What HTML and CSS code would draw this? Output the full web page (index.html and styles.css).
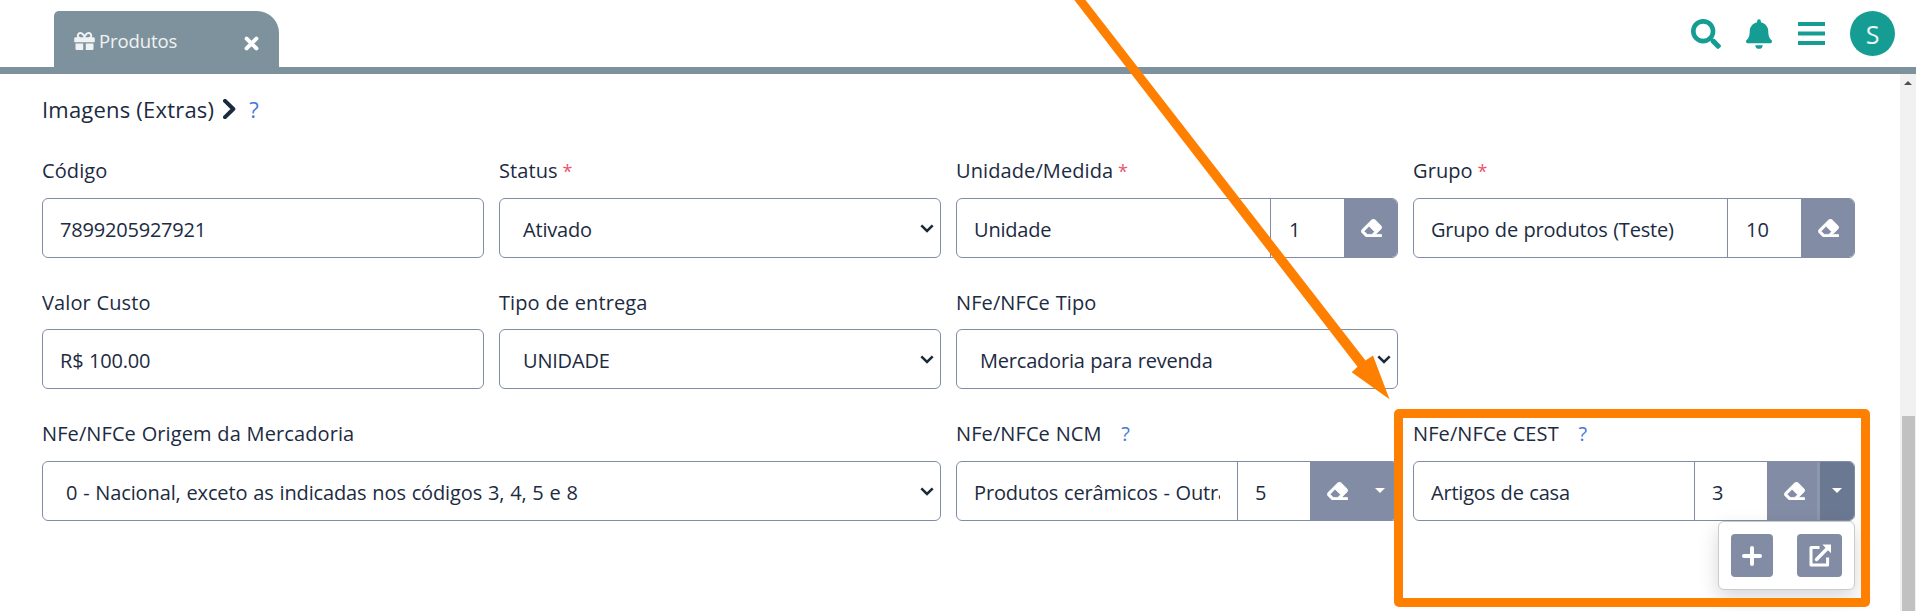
FILE: index.html
```
<!DOCTYPE html>
<html lang="pt-BR">
<head>
<meta charset="utf-8">
<title>Produtos</title>
<link rel="stylesheet" href="styles.css">
</head>
<body>
<svg class="sprite" aria-hidden="true">
  <symbol id="eraser" viewBox="0 32 512 448"><path stroke="#fff" stroke-width="18" d="M497.941 273.941c18.745-18.745 18.745-49.137 0-67.882l-160-160c-18.745-18.745-49.136-18.746-67.883 0l-256 256c-18.745 18.745-18.745 49.137 0 67.882l96 96A48.004 48.004 0 0 0 144 480h356c6.627 0 12-5.373 12-12v-40c0-6.627-5.373-12-12-12H355.883l142.058-142.059zm-302.627-62.627l137.373 137.373L265.373 416H150.628l-80-80 124.686-124.686z"/></symbol>
  <symbol id="chev" viewBox="0 0 14 9"><path d="M1.3 1.3 7 6.9l5.7-5.6" fill="none" stroke="#1c2b3a" stroke-width="2.5"/></symbol>
</svg>
<header class="topbar">
  <div class="tab">
    <svg class="gift" viewBox="0 32 512 448"><path d="M32 448c0 17.7 14.3 32 32 32h160V320H32v128zm256 32h160c17.7 0 32-14.3 32-32V320H288v160zm192-320h-42.1c6.2-12.1 10.1-25.5 10.1-40 0-48.5-39.5-88-88-88-41.6 0-68.5 21.3-103 68.3-34.5-47-61.4-68.3-103-68.3-48.5 0-88 39.5-88 88 0 14.5 3.8 27.9 10.1 40H32c-17.7 0-32 14.3-32 32v80c0 8.8 7.2 16 16 16h480c8.8 0 16-7.2 16-16v-80c0-17.7-14.3-32-32-32zm-326.1 0c-22.1 0-40-17.9-40-40s17.9-40 40-40c19.9 0 34.6 3.3 86.1 80h-86.1zm206.1 0h-86.1c51.4-76.5 65.7-80 86.1-80 22.1 0 40 17.9 40 40s-17.9 40-40 40z"/></svg>
    <span class="tab-name">Produtos</span>
    <svg class="close" viewBox="0 0 15 15"><path d="M2.6 2.6l9.8 9.8M12.4 2.6l-9.8 9.8"/></svg>
  </div>
  <nav class="actions">
    <svg class="search" viewBox="0 0 512 512"><path d="M505 442.7L405.3 343c-4.5-4.5-10.6-7-17-7H372c27.6-35.3 44-79.7 44-128C416 93.1 322.9 0 208 0S0 93.1 0 208s93.1 208 208 208c48.3 0 92.7-16.4 128-44v16.3c0 6.4 2.5 12.5 7 17l99.7 99.7c9.4 9.4 24.6 9.4 33.9 0l28.3-28.3c9.4-9.4 9.4-24.6.1-34zM208 336c-70.7 0-128-57.2-128-128 0-70.7 57.2-128 128-128 70.7 0 128 57.2 128 128 0 70.7-57.2 128-128 128z"/></svg>
    <svg class="bell" viewBox="0 0 448 512"><path d="M224 512c35.32 0 63.97-28.65 63.97-64H160.03c0 35.35 28.65 64 63.97 64zm215.39-149.71c-19.32-20.76-55.47-51.99-55.47-154.29 0-77.7-54.48-139.9-127.94-155.16V32c0-17.67-14.32-32-31.98-32s-31.98 14.33-31.98 32v20.84C118.56 68.1 64.08 130.3 64.08 208c0 102.3-36.15 133.53-55.47 154.29-6 6.45-8.66 14.16-8.61 21.71.11 16.4 12.98 32 32.1 32h383.8c19.12 0 32-15.6 32.1-32 .05-7.55-2.61-15.27-8.61-21.71z"/></svg>
    <svg class="bars" viewBox="0 0 27 23"><path d="M0 0h27v4H0zM0 9.5h27v4H0zM0 19h27v4H0z"/></svg>
    <span class="avatar">S</span>
  </nav>
</header>
<div class="body">
  <main class="content">
    <h2 class="section">
      <span class="section-name">Imagens (Extras)</span>
      <svg class="section-arrow" viewBox="0 0 13 20"><path d="M2 1.8 10.3 10 2 18.2"/></svg>
      <a class="help">?</a>
    </h2>
    <form class="grid">
      <div class="field">
        <label class="label">Código</label>
        <div class="control"><span class="value">7899205927921</span></div>
      </div>
      <div class="field">
        <label class="label">Status <b class="req">*</b></label>
        <div class="control select"><span class="value">Ativado</span><svg class="chev"><use href="#chev"/></svg></div>
      </div>
      <div class="field">
        <label class="label">Unidade/Medida <b class="req">*</b></label>
        <div class="control"><span class="value">Unidade</span><span class="code">1</span><span class="btn"><svg class="eraser"><use href="#eraser"/></svg></span></div>
      </div>
      <div class="field">
        <label class="label">Grupo <b class="req">*</b></label>
        <div class="control"><span class="value">Grupo de produtos (Teste)</span><span class="code">10</span><span class="btn"><svg class="eraser"><use href="#eraser"/></svg></span></div>
      </div>
      <div class="field middle">
        <label class="label">Valor Custo</label>
        <div class="control"><span class="value">R$ 100.00</span></div>
      </div>
      <div class="field middle">
        <label class="label">Tipo de entrega</label>
        <div class="control select"><span class="value">UNIDADE</span><svg class="chev"><use href="#chev"/></svg></div>
      </div>
      <div class="field middle">
        <label class="label">NFe/NFCe Tipo</label>
        <div class="control select"><span class="value">Mercadoria para revenda</span><svg class="chev"><use href="#chev"/></svg></div>
      </div>
      <div class="field wide">
        <label class="label">NFe/NFCe Origem da Mercadoria</label>
        <div class="control select"><span class="value long">0 - Nacional, exceto as indicadas nos códigos 3, 4, 5 e 8</span><svg class="chev"><use href="#chev"/></svg></div>
      </div>
      <div class="field">
        <label class="label">NFe/NFCe NCM <a class="help small">?</a></label>
        <div class="control split"><span class="value"><span class="clip">Produtos cerâmicos - Outras</span></span><span class="code">5</span><span class="btn"><svg class="eraser"><use href="#eraser"/></svg></span><span class="btn toggle"><i class="caret"></i></span></div>
      </div>
      <div class="field">
        <label class="label">NFe/NFCe CEST <a class="help small">?</a></label>
        <div class="control split"><span class="value">Artigos de casa</span><span class="code">3</span><span class="btn"><svg class="eraser"><use href="#eraser"/></svg></span><span class="btn toggle open"><i class="caret"></i></span></div>
        <div class="menu">
          <span class="menu-btn add"><svg viewBox="0 0 20 20"><path d="M10 2v16M2 10h16" fill="none" stroke="#fff" stroke-width="4" stroke-linecap="round"/></svg></span>
          <span class="menu-btn link"><svg viewBox="0 0 22 23"><path d="M10.5 3.4H2v17.6h16.6v-7.5" fill="none" stroke="#fff" stroke-width="3" stroke-linejoin="round"/><path d="M7.5 15.5 18 4.8" fill="none" stroke="#fff" stroke-width="3.4" stroke-linecap="round"/><path d="M13.3.6H22v8.700z" fill="#fff"/></svg></span>
        </div>
      </div>
    </form>
  </main>
  <div class="scrollbar"><i class="up"></i><span class="thumb"></span></div>
</div>
<div class="highlight"></div>
<svg class="arrow" viewBox="0 0 1916 611"><path d="M1074.3 0H1085.5L1365.5 360.5 1373 355.5 1389.5 399.3 1351.7 372.3 1357.5 366.8Z"/></svg>
</body>
</html>
```
FILE: styles.css
```
* { box-sizing: border-box; }
body {
  margin: 0;
  height: 611px;
  overflow: hidden;
  position: relative;
  display: flex;
  flex-direction: column;
  background: #fff;
  color: #1c2b3f;
  font-family: "Open Sans", "Noto Sans", sans-serif;
  font-size: 20px;
}
.sprite { position: absolute; width: 0; height: 0; }
.topbar {
  height: 74px;
  flex: none;
  display: flex;
  justify-content: space-between;
  align-items: flex-end;
  padding: 0 21px 0 54px;
  border-bottom: 7px solid #7d929c;
}
.tab {
  width: 225px;
  height: 56px;
  display: flex;
  align-items: center;
  padding: 4px 20px 0 20px;
  background: #7d929c;
  border-radius: 5px 22px 0 0;
  color: #f0f2f3;
}
.gift { width: 21px; height: 18px; margin-right: 4px; margin-top: -1px; fill: #f0f2f3; }
.tab-name { flex: 1; margin-top: -2px; font-size: 18.5px; letter-spacing: -.1px; }
.close { width: 15px; height: 15px; margin-top: 5px; fill: none; stroke: #fff; stroke-width: 4; stroke-linecap: round; }
.actions { display: flex; align-items: center; height: 45px; margin-bottom: 11px; fill: #159d93; }
.search { width: 30px; height: 30px; margin-right: 25px; }
.bell { width: 26px; height: 30px; margin-right: 26px; }
.bars { width: 27px; height: 23px; margin-right: 25px; }
.avatar {
  width: 45px;
  height: 45px;
  border-radius: 50%;
  background: #159d93;
  color: #e9f6f4;
  font-size: 25px;
  line-height: 46px;
  text-align: center;
}
.body { flex: 1; display: flex; min-height: 0; }
.content { flex: 1; padding: 19px 45px 0 42px; }
.section { display: flex; align-items: center; height: 32px; margin: 0 0 33px; font-size: 22px; font-weight: 400; line-height: 32px; }
.section-name { letter-spacing: .2px; }
.section-arrow { width: 13px; height: 20px; margin: -1px 13px 0 9px; fill: none; stroke: #1c2b3f; stroke-width: 4; stroke-linejoin: round; stroke-linecap: round; }
.help { color: #4a78d8; }
.help.small { margin-left: 14px; }
.grid { display: grid; grid-template-columns: repeat(4, 442px); grid-template-rows: 131px 132px 110px; column-gap: 15px; }
.field { position: relative; display: flex; flex-direction: column; }
.wide { grid-column: span 2; }
.label { height: 26px; margin-bottom: 14px; line-height: 26px; letter-spacing: .1px; word-spacing: .4px; white-space: pre; }
.middle .label { margin: 1px 0 13px; }
.req { margin-left: -1px; color: #e8566c; font-size: 18px; font-weight: 400; }
.control {
  height: 60px;
  display: flex;
  align-items: center;
  border: 1px solid #828da5;
  border-radius: 6px;
  background: #fff;
  overflow: hidden;
}
.value { flex: 1; min-width: 0; padding: 3px 17px 0; white-space: nowrap; overflow: hidden; letter-spacing: -.2px; word-spacing: .6px; }
.value.long { letter-spacing: -.13px; word-spacing: .8px; }
.clip { display: block; overflow: hidden; letter-spacing: -.15px; word-spacing: .8px; }
.select .value { padding-left: 23px; }
.chev { width: 14px; height: 9px; margin-right: 6px; }
.code { width: 74px; height: 58px; flex: none; padding: 3px 0 0 18px; line-height: 55px; border-left: 1px solid #828da5; }
.split .code { width: 73px; padding-left: 17px; }
.btn { width: 53px; height: 58px; padding-left: 2px; display: flex; align-items: center; justify-content: center; background: #828da5; }
.eraser { width: 21px; height: 18px; fill: #fff; }
.toggle { width: 34px; padding-left: 0; }
.toggle.open { background: #6b7891; box-shadow: -3px 0 #8a97ac; }
.caret { width: 0; height: 0; border: 5px solid transparent; border-top-color: #fff; border-bottom: 0; margin-top: -1px; }
.menu {
  position: absolute;
  top: 100px;
  right: 0;
  width: 137px;
  height: 69px;
  display: flex;
  justify-content: space-between;
  padding: 12px;
  background: #fff;
  border: 1px solid #c9cbce;
  border-radius: 6px;
  box-shadow: 0 8px 20px rgba(0, 0, 0, .16);
}
.menu-btn { height: 43px; display: flex; align-items: center; justify-content: center; background: #828da5; border-radius: 4px; }
.add { width: 42px; }
.add svg { width: 20px; height: 20px; }
.link { width: 45px; }
.link svg { width: 22px; height: 23px; }
.scrollbar { width: 16px; display: flex; flex-direction: column; align-items: center; background: #f1f1f1; }
.up { margin-top: 7px; border: 4px solid transparent; border-bottom-color: #505050; border-top: 0; }
.thumb { width: 13px; flex: 1; margin-top: 331px; background: #c1c1c1; }
.highlight { position: absolute; left: 1394px; top: 409px; width: 476px; height: 198px; border: 9px solid #ff8000; border-radius: 5px; }
.arrow { position: absolute; left: 0; top: 0; width: 1916px; height: 611px; fill: #ff8000; pointer-events: none; }
```
